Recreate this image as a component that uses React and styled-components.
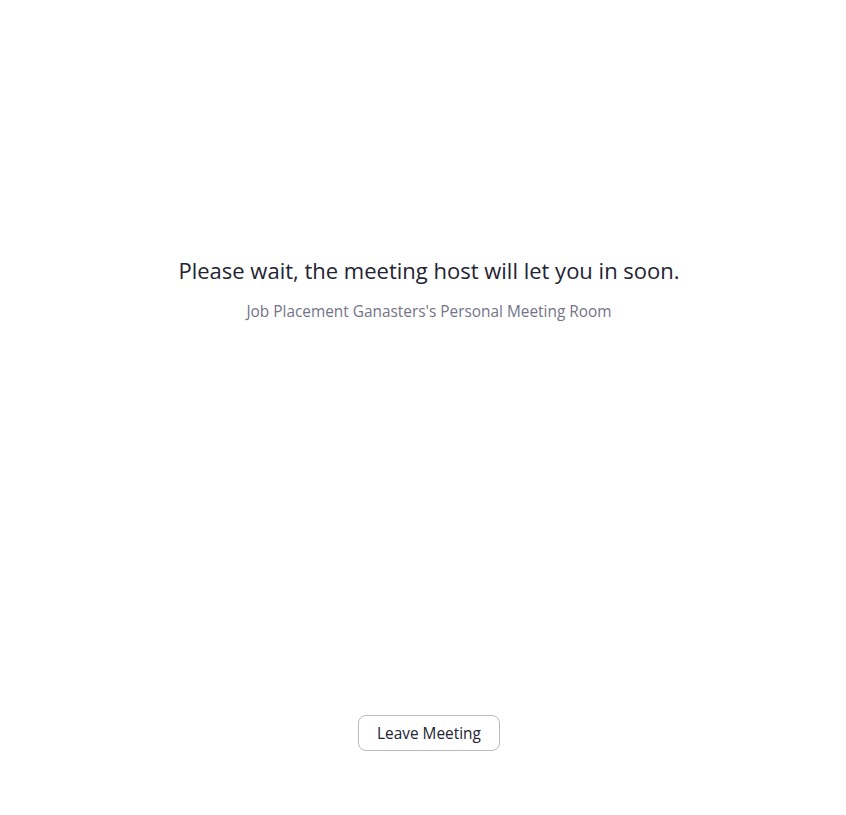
import React from 'react';
import styled, { createGlobalStyle } from 'styled-components';

const GlobalStyle = createGlobalStyle`
  html, body {
    margin: 0;
    padding: 0;
    background: #fff;
    font-family: "Open Sans", "Liberation Sans", sans-serif;
  }
`;

const Page = styled.div`
  height: 815px;
  padding-left: 12px;
  display: flex;
  flex-direction: column;
  align-items: center;
`;

const WaitInfo = styled.div`
  flex: 1;
  display: flex;
  flex-direction: column;
  align-items: center;
  padding-top: 254px;
`;

const Title = styled.h1`
  margin: 0;
  font-size: 22px;
  font-weight: 400;
  line-height: 33px;
  color: #232333;
`;

const Subtitle = styled.p`
  margin: 14px 0 0;
  font-size: 15.4px;
  line-height: 22px;
  color: #747487;
`;

const Footer = styled.div`
  padding-bottom: 64px;
`;

const Button = styled.button`
  height: 36px;
  padding: 0 18.5px;
  border: 1px solid #bababa;
  border-radius: 8px;
  background: #fff;
  color: #232333;
  font-family: inherit;
  font-size: 15.4px;
  cursor: pointer;

  &:hover {
    background: #f7f7fa;
  }
`;

const App = () => {
  return (
    <>
      <GlobalStyle />
      <Page>
        <WaitInfo>
          <Title>Please wait, the meeting host will let you in soon.</Title>
          <Subtitle>Job Placement Ganasters's Personal Meeting Room</Subtitle>
        </WaitInfo>
        <Footer>
          <Button>Leave Meeting</Button>
        </Footer>
      </Page>
    </>
  );
};

export default App;
